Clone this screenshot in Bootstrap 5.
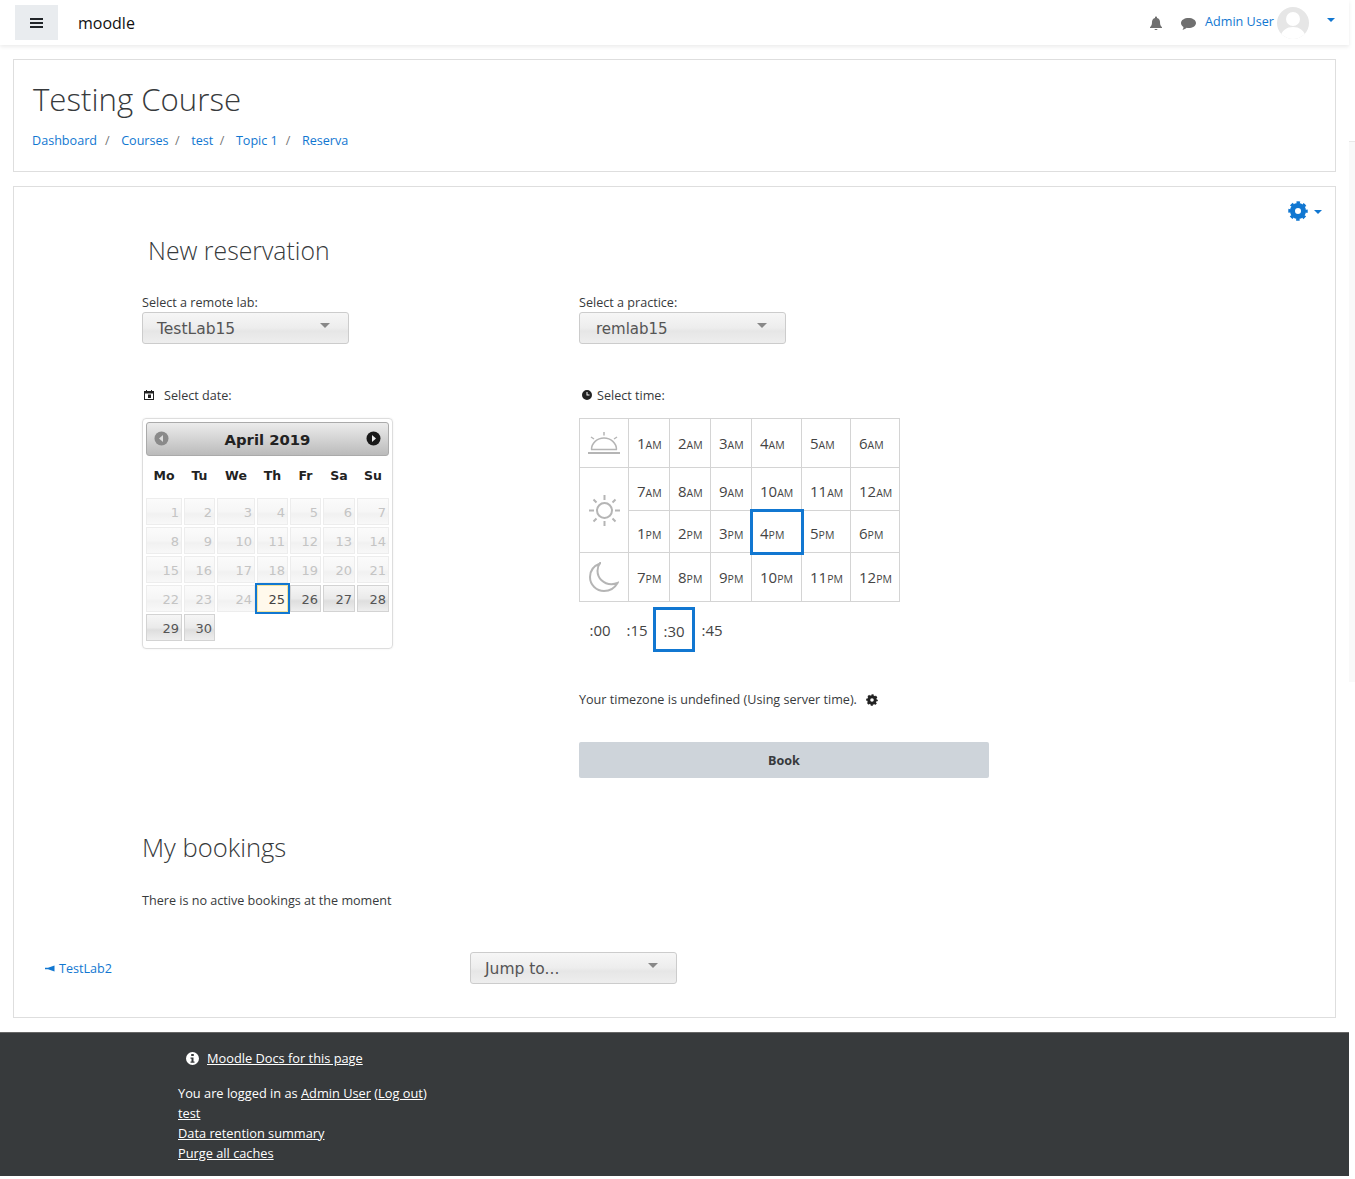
<!DOCTYPE html>
<html lang="en">
<head>
  <meta charset="UTF-8" />
  <meta name="viewport" content="width=device-width, initial-scale=1" />
  <title>Testing Course</title>
  <link href="https://cdn.jsdelivr.net/npm/bootstrap@5.3.3/dist/css/bootstrap.min.css" rel="stylesheet" />
  <style>
    html, body { overflow: hidden; }
    body {
      background: #fff;
      color: #373a3c;
      font-family: "Open Sans", "Noto Sans", sans-serif;
      font-size: 12.6px;
      line-height: 20px;
    }
    a { color: #1177d1; text-decoration: none; }
    .page-wrap { width: 1349px; height: 1179px; }
    .side-strip { position: absolute; left: 1349px; top: 141px; width: 6px; height: 541px; background: #f9f9f9; border-top: 1px solid #e8e8e8; }

    .top-bar { height: 45px; padding: 5px 14px 0 15px; background: #fff; box-shadow: 0 2px 4px rgba(0,0,0,.08); }
    .menu-btn { width: 43px; height: 35px; background: #e9ecef; border: 0; border-radius: 0; padding: 0; }
    .brand-name { margin-left: 20px; color: #111; font-size: 16px; margin-top: -5px; }
    .top-icon { fill: #6f6f6f; flex-shrink: 0; }
    .user-group { margin-top: 2px; }
    .user-name { margin-left: 9px; margin-top: -2px; }
    .avatar { margin: 0 0 0 3px; width: 32px; height: 32px; border-radius: 50%; overflow: hidden; }
    .blue-caret { width: 0; height: 0; border: 4px solid transparent; border-top-color: #1177d1; border-bottom: 0; }

    .box { margin: 0 13px; border: 1px solid #dedede; background: #fff; }
    .head-box { margin-top: 14px; height: 113px; padding: 16px 18px 0; }
    .page-title { font-size: 31.2px; font-weight: 300; line-height: 46px; margin: 0 0 9px 1px; color: #373a3c; }
    .crumb-list { margin: 0; font-size: 12.6px; }
    .crumb-list .breadcrumb-item + .breadcrumb-item { padding-left: 8px; }
    .crumb-list .breadcrumb-item + .breadcrumb-item::before { padding-right: 11.500px; color: #777; }
    .crumb-list .breadcrumb-item:nth-child(3), .crumb-list .breadcrumb-item:nth-child(4) { padding-left: 6.500px; }

    .main-box { margin-top: 14px; height: 832px; padding: 0 0 0 128px; position: relative; }
    .gear-menu { position: absolute; top: 14px; right: 13px; }
    .sub-head { font-size: 24.800px; font-weight: 300; line-height: 36px; margin: 45px 0 0 6px; }
    .form-cols { margin-top: 24px; }
    .left-col { width: 437px; }
    .field-label { height: 20px; padding-top: 1px; }
    .fake-select {
      width: 207px; height: 32px; padding: 0 14px;
      font-family: "DejaVu Sans", sans-serif; font-size: 15.500px; line-height: 33px; color: #555;
      border: 1px solid #ccc; border-radius: 3px;
      background: linear-gradient(#f6f6f6, #ededed 50%, #e6e6e6 60%, #eee);
      position: relative;
    }
    .fake-select::after { content: ""; position: absolute; right: 18px; top: 10px; border: 5px solid transparent; border-top-color: #888; border-bottom: 0; }
    .wide-pad { padding-left: 16px; font-size: 15px; }
    .label-row { margin-top: 41px; height: 20px; padding-top: 2px; }
    .small-ico { fill: #222; flex-shrink: 0; margin-top: -2px !important; }

    .cal-box { margin-top: 13px; width: 251px; height: 231px; border: 1px solid #ddd; border-radius: 4px; padding: 3px; box-shadow: 0 0 2px rgba(0,0,0,.08); font-family: "DejaVu Sans", sans-serif; }
    .cal-head { height: 34px; border: 1px solid #aaa; border-radius: 3px; background: linear-gradient(#ececec, #bbb); position: relative; text-align: center; font-weight: 700; font-size: 14.800px; line-height: 34px; color: #222; }
    .cal-prev, .cal-next { position: absolute; top: 8px; width: 15px; height: 15px; }
    .cal-prev { left: 7px; }
    .cal-next { right: 7px; }
    .cal-table { border-collapse: separate; border-spacing: 2px; table-layout: fixed; width: 247px; margin-left: -2px; }
    .cal-table th { font-size: 12.500px; font-weight: 700; text-align: center; height: 34px; color: #222; padding: 1px 0 0; }
    .cal-table td { height: 27px; padding: 2px 2px 0 0; text-align: right; font-size: 13px; line-height: 23px; color: #555; border: 1px solid #d3d3d3; background: linear-gradient(#f6f6f6, #eaeaea 50%, #dedede 60%, #eee); }
    .cal-table td.day-off { color: #c4c4c4; border-color: #ededed; background: linear-gradient(#fbfbfb, #f6f6f6 50%, #f1f1f1 60%, #f8f8f8); }
    .cal-table td.day-today { background: #fff9ec; border: 1px solid #f3e29c; outline: 2px solid #1177d1; color: #444; }
    .cal-table td.no-day { border: 0; background: none; }
    .cal-table .gap-row th { height: 2px; padding: 0; line-height: 0; font-size: 0; }

    .time-table { margin-top: 13px; border-collapse: collapse; table-layout: fixed; width: 320px; font-size: 15px; color: #444; }
    .time-table td { border: 1px solid #d4d4d4; padding: 1px 0 0 8px; white-space: nowrap; vertical-align: middle; }
    .time-table td.sky-cell { padding: 0; text-align: center; }
    .time-table td.picked { outline: 3px solid #1177d1; outline-offset: -1px; }
    .time-table small { font-size: 10.500px; }
    .row-49 { height: 49px; }
    .row-43 { height: 43px; }
    .row-42 { height: 42px; }
    .row-43 td:not(.sky-cell), .row-42 td { padding-top: 5px; }
    .minute-row { margin-top: 5px; height: 45px; font-size: 15px; color: #444; line-height: 47px; }
    .minute-item { width: 42px; text-align: center; }
    .minute-item.picked { border: 3px solid #1177d1; line-height: 43px; height: 45px; margin: 0 5px 0 0; }
    .zone-note { margin-top: 37px; height: 20px; padding-top: 2px; }
    .book-btn { display: block; margin-top: 33px; width: 410px; height: 36px; border: 0; border-radius: 2px; background: #ced4da; color: #373a3c; font-weight: 700; font-size: 12.600px; padding: 2px 0 0; }

    .book-head { font-size: 25.600px; font-weight: 300; line-height: 36px; margin-top: 52px; }
    .no-book { margin-top: 25px; }
    .jump-row { margin: 41px 0 0 -97px; }
    .back-link { width: 425px; margin-top: 2px; }

    .dark-foot { margin-top: 14px; height: 144px; background: #373a3c; border-top: 1px solid #666; color: #fff; padding: 15px 0 0 178px; font-size: 12.800px; }
    .dark-foot a { color: #fff; text-decoration: underline; }
    .docs-line { margin-left: 8px; margin-bottom: 15px; }
    .docs-line svg { margin: -3px 8px 0 0; vertical-align: middle; fill: #fff; }
  </style>
</head>
<body>
  <div class="page-wrap">
    <!-- top bar -->
    <nav class="top-bar d-flex align-items-start">
      <button class="menu-btn d-flex align-items-center justify-content-center" type="button" aria-label="Menu">
        <svg width="13" height="12" viewBox="0 0 13 12"><path fill="#212529" d="M0 1h13v2H0zM0 5h13v2H0zM0 9h13v2H0z"/></svg>
      </button>
      <div class="brand-name align-self-center">moodle</div>
      <div class="user-group ms-auto d-flex align-items-center">
        <svg class="top-icon" width="14" height="14" viewBox="0 0 14 14"><path d="M7 0.500c.6 0 1 .4 1 1v.4c2 .5 3 2.200 3 4.100 0 3 .7 4 2 5.300v.7H1v-.7C2.300 10 3 9 3 6c0-1.900 1-3.600 3-4.100v-.4c0-.6.400-1 1-1zM5.500 13h3c0 .7-.7 1-1.500 1s-1.500-.3-1.500-1z"/></svg>
        <svg class="top-icon" style="margin-left:18px" width="15" height="13" viewBox="0 0 15 13"><path d="M7.500 1C11.500 1 15 3 15 6s-3.500 5-7.500 5c-.6 0-1.200 0-1.800-.2C4.600 11.800 3 12.500 1.500 13c.6-.8 1-1.800 1-2.900C1 9.200 0 7.700 0 6c0-3 3.500-5 7.500-5z"/></svg>
        <a class="user-name" href="#">Admin User</a>
        <div class="avatar">
          <svg width="32" height="32" viewBox="0 0 32 32"><rect width="32" height="32" fill="#e6e6e6"/><circle cx="16" cy="12" r="7" fill="#fff"/><path d="M3 32c1-9 7-12 13-12s12 3 13 12z" fill="#fff"/></svg>
        </div>
        <div class="blue-caret" style="margin: -6px 0 0 18px"></div>
      </div>
    </nav>

    <!-- page header -->
    <div class="box head-box">
      <h1 class="page-title">Testing Course</h1>
      <nav aria-label="breadcrumb">
        <ol class="breadcrumb crumb-list">
          <li class="breadcrumb-item"><a href="#">Dashboard</a></li>
          <li class="breadcrumb-item"><a href="#">Courses</a></li>
          <li class="breadcrumb-item"><a href="#">test</a></li>
          <li class="breadcrumb-item"><a href="#">Topic 1</a></li>
          <li class="breadcrumb-item"><a href="#">Reserva</a></li>
        </ol>
      </nav>
    </div>

    <!-- main content -->
    <div class="box main-box">
      <div class="gear-menu d-flex align-items-center">
        <svg width="20" height="20" viewBox="0 0 20 20"><circle cx="10" cy="10" r="5.500" fill="none" stroke="#1177d1" stroke-width="5"/><circle cx="10" cy="10" r="8" fill="none" stroke="#1177d1" stroke-width="3.500" stroke-dasharray="3.300 2.980" stroke-dashoffset="1.650"/></svg>
        <div class="blue-caret" style="margin: 2px 0 0 6px"></div>
      </div>

      <h2 class="sub-head">New reservation</h2>

      <div class="form-cols d-flex">
        <!-- left column -->
        <div class="left-col">
          <div class="field-label">Select a remote lab:</div>
          <div class="fake-select">TestLab15</div>
          <div class="label-row d-flex align-items-center">
            <svg class="small-ico" style="margin: 0 10px 0 2px" width="10" height="10" viewBox="0 0 10 10"><path fill-rule="evenodd" d="M2 0h1v1h4V0h1v1h2v9H0V1h2zM1 3.500V9h8V3.500zM4 4.500h3V8H4z"/></svg>
            Select date:
          </div>
          <div class="cal-box">
            <div class="cal-head">
              <svg class="cal-prev" viewBox="0 0 15 15"><circle cx="7.500" cy="7.500" r="7" fill="#8a8a8a"/><path d="M9 4v7L5 7.500z" fill="#ddd"/></svg>
              April 2019
              <svg class="cal-next" viewBox="0 0 15 15"><circle cx="7.500" cy="7.500" r="7" fill="#1a1a1a"/><path d="M6 4v7l4-3.500z" fill="#eee"/></svg>
            </div>
            <table class="cal-table">
              <colgroup>
                <col style="width:36px" /><col style="width:31px" /><col style="width:38px" /><col style="width:31px" /><col style="width:31px" /><col style="width:32px" /><col style="width:32px" />
              </colgroup>
              <thead>
                <tr><th>Mo</th><th>Tu</th><th>We</th><th>Th</th><th>Fr</th><th>Sa</th><th>Su</th></tr>
                <tr class="gap-row"><th colspan="7"></th></tr>
              </thead>
              <tbody id="cal-body"></tbody>
            </table>
          </div>
        </div>

        <!-- right column -->
        <div>
          <div class="field-label">Select a practice:</div>
          <div class="fake-select wide-pad">remlab15</div>
          <div class="label-row d-flex align-items-center">
            <svg class="small-ico" style="margin: 0 5px 0 3px" width="10" height="10" viewBox="0 0 10 10"><path fill-rule="evenodd" d="M5 0a5 5 0 1 1 0 10A5 5 0 0 1 5 0zM4.500 2v3.500H7.500V4.500H5.500V2z"/></svg>
            Select time:
          </div>
          <table class="time-table">
            <colgroup>
              <col style="width:49px" /><col style="width:41px" /><col style="width:41px" /><col style="width:41px" /><col style="width:50px" /><col style="width:49px" /><col style="width:49px" />
            </colgroup>
            <tbody>
              <tr class="row-49">
                <td class="sky-cell">
                  <svg width="32" height="22" viewBox="0 0 32 22" fill="none" stroke="#b5b5b5" stroke-width="1.500"><path d="M0 21h32" stroke-width="2"/><path d="M3 17.500h26M3.500 17.500a12.500 11.500 0 0 1 25 0" /><path d="M16 0v3.500M3 5l3 2M29 5l-3 2" /></svg>
                </td>
                <td>1<small>AM</small></td><td>2<small>AM</small></td><td>3<small>AM</small></td><td>4<small>AM</small></td><td>5<small>AM</small></td><td>6<small>AM</small></td>
              </tr>
              <tr class="row-43">
                <td class="sky-cell" rowspan="2">
                  <svg width="33" height="33" viewBox="0 0 33 33" fill="none" stroke="#b5b5b5" stroke-width="2"><circle cx="16.500" cy="16.500" r="7.500"/><path d="M16.500 1v5M16.500 27v5M1 16.500h5M27 16.500h5M5.500 5.500l3 3M24.500 24.500l3 3M27.500 5.500l-3 3M8.500 24.500l-3 3"/></svg>
                </td>
                <td>7<small>AM</small></td><td>8<small>AM</small></td><td>9<small>AM</small></td><td>10<small>AM</small></td><td>11<small>AM</small></td><td>12<small>AM</small></td>
              </tr>
              <tr class="row-42">
                <td>1<small>PM</small></td><td>2<small>PM</small></td><td>3<small>PM</small></td><td class="picked">4<small>PM</small></td><td>5<small>PM</small></td><td>6<small>PM</small></td>
              </tr>
              <tr class="row-49">
                <td class="sky-cell">
                  <svg width="30" height="30" viewBox="0 0 30 30" fill="none" stroke="#b5b5b5" stroke-width="2"><path d="M11 1.500C4.500 4 1 9 1 15c0 8 6.500 14 14 14 6 0 11-3.500 13.500-8-2 .8-4 1.200-6 1.200-8 0-14-6-14-13.500 0-2.700.9-5.400 2.500-7.700z" /></svg>
                </td>
                <td>7<small>PM</small></td><td>8<small>PM</small></td><td>9<small>PM</small></td><td>10<small>PM</small></td><td>11<small>PM</small></td><td>12<small>PM</small></td>
              </tr>
            </tbody>
          </table>
          <div class="minute-row d-flex">
            <div class="minute-item">:00</div>
            <div class="minute-item" style="width:32px">:15</div>
            <div class="minute-item picked">:30</div>
            <div class="minute-item" style="width:24px">:45</div>
          </div>
          <div class="zone-note d-flex align-items-center">
            Your timezone is undefined (Using server time).
            <svg style="margin-left:9px" width="12" height="12" viewBox="0 0 20 20"><circle cx="10" cy="10" r="5.500" fill="none" stroke="#222" stroke-width="5"/><circle cx="10" cy="10" r="8" fill="none" stroke="#222" stroke-width="3.500" stroke-dasharray="3.300 2.980" stroke-dashoffset="1.650"/></svg>
          </div>
          <button class="book-btn" type="button">Book</button>
        </div>
      </div>

      <h2 class="book-head">My bookings</h2>
      <div class="no-book">There is no active bookings at the moment</div>

      <div class="jump-row d-flex align-items-center">
        <div class="back-link">
          <a href="#"><svg width="10" height="7" viewBox="0 0 10 7" style="margin:-2px 4px 0 0; vertical-align:middle"><path fill="#1177d1" d="M0 2.800h3L9.500 .5v6L3 4.200H0z"/></svg>TestLab2</a>
        </div>
        <div class="fake-select">Jump to...</div>
      </div>
    </div>

    <!-- footer -->
    <footer class="dark-foot">
      <div class="docs-line">
        <svg width="13" height="13" viewBox="0 0 13 13"><path fill-rule="evenodd" d="M6.500 0a6.500 6.500 0 1 1 0 13 6.500 6.500 0 0 1 0-13zM5.200 2v2h2.600V2zM4.500 5.500v1.200h1V9.500h-1v1.300h4V9.500h-1V5.500z"/></svg><a href="#">Moodle Docs for this page</a>
      </div>
      <div>You are logged in as <a href="#">Admin User</a> (<a href="#">Log out</a>)</div>
      <div><a href="#">test</a></div>
      <div><a href="#">Data retention summary</a></div>
      <div><a href="#">Purge all caches</a></div>
    </footer>
  </div>
  <div class="side-strip"></div>

  <script src="https://cdn.jsdelivr.net/npm/bootstrap@5.3.3/dist/js/bootstrap.bundle.min.js"></script>
  <script>
    // April 2019 starts on Monday, everything before the 25th is disabled
    const calBody = document.getElementById('cal-body');
    let html = '';
    for (let d = 1; d <= 30; d += 7) {
      html += '<tr>';
      for (let i = 0; i < 7; i++) {
        const day = d + i;
        if (day > 30) { html += '<td class="no-day"></td>'; continue; }
        let cls = '';
        if (day < 25) cls = 'day-off';
        if (day === 25) cls = 'day-today';
        html += `<td class="${cls}">${day}</td>`;
      }
      html += '</tr>';
    }
    calBody.innerHTML = html;
  </script>
</body>
</html>
